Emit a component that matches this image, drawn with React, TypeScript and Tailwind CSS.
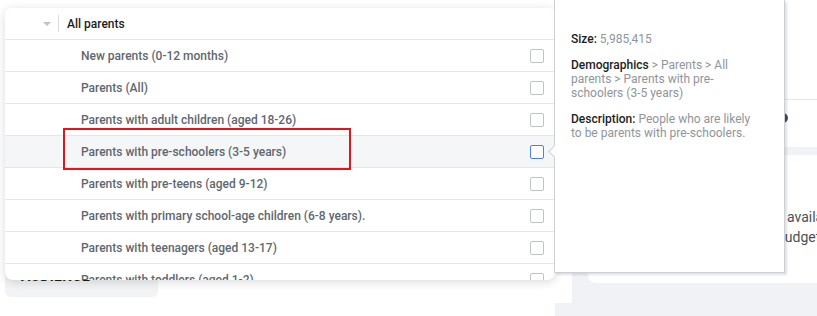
import React from 'react';

const rows = [
  'New parents (0-12 months)',
  'Parents (All)',
  'Parents with adult children (aged 18-26)',
  'Parents with pre-schoolers (3-5 years)',
  'Parents with pre-teens (aged 9-12)',
  'Parents with primary school-age children (6-8 years).',
  'Parents with teenagers (aged 13-17)',
  'Parents with toddlers (aged 1-2)',
];

const HOVERED = 3;

function Checkbox({ active }: { active: boolean }) {
  return (
    <span
      className={
        active
          ? 'block h-[14px] w-[14px] rounded-[2px] border border-[#4c80f1] bg-white'
          : 'block h-[14px] w-[14px] rounded-[2px] border border-[#bec3c9] bg-white'
      }
    />
  );
}

function Tooltip() {
  return (
    <div className="absolute left-[554px] top-0 h-[273px] w-[231px] border border-t-0 border-[#ccd0d5] bg-white shadow-[2px_2px_2px_rgba(0,0,0,0.12)]">
      <span className="absolute left-[-5px] top-[147px] h-[9px] w-[9px] rotate-45 border-b border-l border-[#ccd0d5] bg-white" />
      <div className="w-[196px] pl-4 pt-8 text-[12px] leading-[14px] text-[#90949c]">
        <p className="mb-3">
          <span className="font-medium text-[#1c1e21]">Size:</span> 5,985,415
        </p>
        <p className="mb-3">
          <span className="font-medium text-[#1c1e21]">Demographics</span> &gt; Parents &gt; All parents &gt; Parents with pre-schoolers (3-5 years)
        </p>
        <p>
          <span className="font-medium text-[#1c1e21]">Description:</span> People who are likely to be parents with pre-schoolers.
        </p>
      </div>
    </div>
  );
}

function Dropdown() {
  return (
    <div className="absolute left-[5px] top-2 h-[272px] w-[550px] overflow-hidden rounded-b-lg rounded-t-md bg-white shadow-[0_2px_10px_rgba(0,0,0,0.15)]">
      <div className="flex h-8 items-center border-b border-[#e4e6eb]">
        <span className="ml-[38px] h-0 w-0 border-x-[4px] border-t-[4px] border-x-transparent border-t-[#bec3c9]" />
        <span className="ml-[7px] h-[17px] w-px bg-[#dadde1]" />
        <span className="ml-2 text-[12px] font-medium text-[#1c1e21]">All parents</span>
      </div>
      {rows.map((label, i) => (
        <div
          key={label}
          className={
            i === HOVERED
              ? 'flex h-8 items-center border-b border-[#e4e6eb] bg-[#f5f6f7] pl-[76px] pr-[11px]'
              : 'flex h-8 items-center border-b border-[#e4e6eb] pl-[76px] pr-[11px]'
          }
        >
          <span className="flex-1 text-[12px] font-medium text-[#606770]">{label}</span>
          <Checkbox active={i === HOVERED} />
        </div>
      ))}
    </div>
  );
}

export default function App() {
  return (
    <div
      className="relative h-[316px] w-[817px] overflow-hidden bg-white"
      style={{ fontFamily: 'Roboto, "Liberation Sans", sans-serif' }}
    >
      <div className="flex h-full">
        {/* left area with the save button under the dropdown */}
        <div className="flex w-[555px] shrink-0 flex-col justify-end bg-white pb-[19px] pl-[5px]">
          <div className="flex h-[42px] w-[153px] items-end rounded-md bg-[#f2f3f5] pb-[10px] pl-[16px]">
            <span className="text-[14px] font-bold uppercase tracking-wide text-[#1c1e21]">Save This Audience</span>
          </div>
        </div>

        {/* right column */}
        <div className="flex min-w-0 flex-1 flex-col bg-[#f0f2f5]">
          <div className="flex flex-1">
            <div className="h-[303px] w-[17px] shrink-0 bg-white" />
            <div className="flex min-w-0 flex-1 flex-col gap-2 overflow-hidden pl-4">
              <div className="h-[147px] bg-white">
                <div className="h-[100px] border-b border-[#e4e6eb]" />
                <div className="ml-[190px] mt-[13px] h-[10px] w-[10px] rounded-full bg-[#4b4f56]" />
              </div>
              <div className="h-[128px] rounded-bl-lg bg-white pt-[52px] text-[14px] leading-[20px] text-[#4b4f56]">
                <span className="ml-[199px] block whitespace-nowrap">available</span>
                <span className="ml-[189px] block whitespace-nowrap">budget</span>
              </div>
            </div>
          </div>
        </div>
      </div>

      <Dropdown />
      <Tooltip />

      {/* annotation */}
      <div className="absolute left-[63px] top-[128px] h-[42px] w-[288px] border-2 border-[#e8121b]" />
    </div>
  );
}
